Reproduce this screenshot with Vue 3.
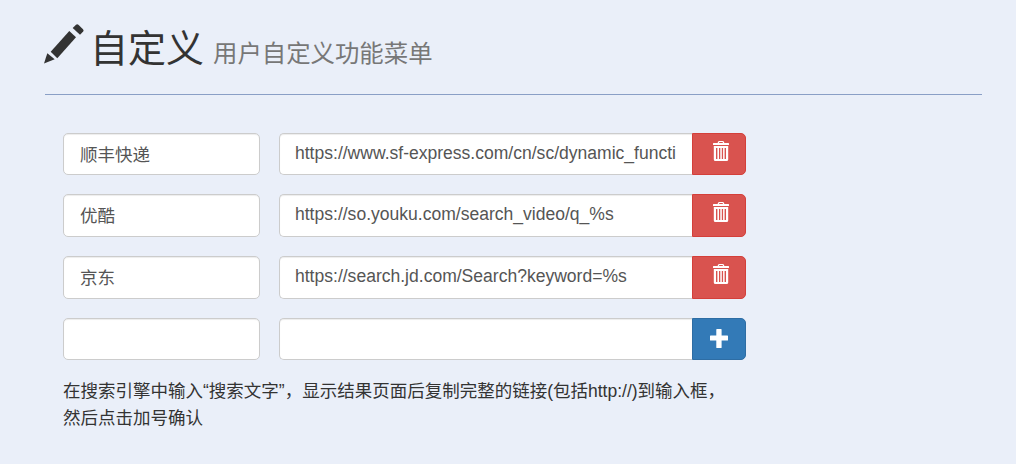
<script setup>
const rows = [
  { name: '顺丰快递', url: 'https://www.sf-express.com/cn/sc/dynamic_function/waybill/#search/bill-number/%s', kind: 'del' },
  { name: '优酷', url: 'https://so.youku.com/search_video/q_%s', kind: 'del' },
  { name: '京东', url: 'https://search.jd.com/Search?keyword=%s', kind: 'del' },
  { name: '', url: '', kind: 'add' }
]
</script>

<template>
  <div class="page">
    <header class="head">
      <svg class="pencil" viewBox="0 0 40 40" aria-hidden="true">
        <path d="M0 39.6 L3.3 29.3 L10.7 35.3 Z" />
        <path d="M6.7 27.7 L25.3 7 L32 13.3 L13.3 34.3 Z" />
        <path d="M28.7 4 L32 .8 Q33.2 -.2 34.4 .8 L39 5.2 Q40 6.4 39.2 7.4 L36 10.7 Z" />
      </svg>
      <h1 class="title">自定义<small class="sub">用户自定义功能菜单</small></h1>
    </header>
    <div class="form">
      <div v-for="(r, i) in rows" :key="i" class="row">
        <input class="field name" type="text" :value="r.name" />
        <div class="group">
          <input class="field url" type="text" :value="r.url" />
          <button class="btn" :class="r.kind" type="button">
            <svg v-if="r.kind === 'del'" class="ico trash" viewBox="0 0 16 20" aria-hidden="true">
              <path fill-rule="evenodd" d="M4.6 2 L5.2 .6 Q5.5 0 6.2 0 H9.8 Q10.5 0 10.8 .6 L11.4 2 H15.4 Q16 2 16 2.6 V4 H0 V2.6 Q0 2 .6 2 Z M6 2 H10 L9.6 1 H6.4 Z" />
              <path fill-rule="evenodd" d="M.8 5 H15.2 V18.4 Q15.2 20 13.6 20 H2.4 Q.8 20 .8 18.4 Z M3 7 V18 H4.4 V7 Z M6 7 V18 H7.3 V7 Z M8.8 7 V18 H10.1 V7 Z M11.6 7 V18 H13 V7 Z" />
            </svg>
            <svg v-else class="ico plus" viewBox="0 0 18 19" aria-hidden="true">
              <path d="M6.3 .5 Q6.3 0 6.9 0 H11 Q11.6 0 11.6 .5 V6.5 H17.4 Q18 6.5 18 7 V11 Q18 11.6 17.4 11.6 H11.6 V18.5 Q11.6 19 11 19 H6.9 Q6.3 19 6.3 18.5 V11.6 H.6 Q0 11.6 0 11 V7 Q0 6.5 .6 6.5 H6.3 Z" />
            </svg>
          </button>
        </div>
      </div>
      <p class="note">在搜索引擎中输入“搜索文字”，显示结果页面后复制完整的链接(包括http://)到输入框，<br />然后点击加号确认</p>
    </div>
  </div>
</template>

<style>
html, body { margin: 0; background: #eaeff9; }
</style>

<style scoped>
.page {
  width: 1016px;
  height: 464px;
  box-sizing: border-box;
  padding: 24px 34px 0 44px;
  background: #eaeff9;
  color: #333;
  font-family: "Liberation Sans", "Noto Sans CJK SC", sans-serif;
  overflow: hidden;
}
.head {
  display: flex;
  align-items: flex-start;
  height: 70px;
  margin-left: 1px;
  border-bottom: 1px solid #8a9fc6;
}
.pencil {
  width: 40px;
  height: 40px;
  margin-left: -1px;
  margin-right: 6px;
  fill: #333;
  flex: none;
}
.title {
  margin: 1px 0 0;
  font-size: 38px;
  line-height: 48px;
  font-weight: 400;
  white-space: nowrap;
}
.sub {
  margin-left: 9px;
  font-size: 24.4px;
  font-weight: 400;
  color: #777;
}
.form {
  width: 683px;
  margin: 37.8px 0 0 19px;
  display: flex;
  flex-direction: column;
  gap: 19.16px;
}
.row {
  display: flex;
  gap: 19px;
  height: 42.5px;
}
.group {
  display: flex;
  flex: none;
  width: 467px;
}
.field {
  box-sizing: border-box;
  height: 100%;
  margin: 0;
  padding: 0 16px 2px;
  background: #fff;
  border: 1px solid #ccc;
  box-shadow: inset 0 1px 1px rgba(0, 0, 0, .075);
  font: 17.55px/1.33 "Liberation Sans", "Noto Sans CJK SC", sans-serif;
  color: #555;
  outline: none;
}
.name {
  width: 197px;
  flex: none;
  border-radius: 5px;
}
.url {
  width: 413px;
  flex: none;
  padding-left: 15px;
  border-radius: 5px 0 0 5px;
  border-right: 0;
}
.btn {
  width: 54px;
  flex: none;
  height: 100%;
  margin: 0;
  padding: 0;
  display: flex;
  align-items: flex-start;
  justify-content: center;
  box-sizing: border-box;
  border: 1px solid;
  border-radius: 0 5px 5px 0;
}
.del { background: #d9534f; border-color: #d43f3a; }
.add { background: #337ab7; border-color: #2e6da4; }
.ico { fill: #fff; display: block; }
.trash { width: 16px; height: 20px; margin: 7px 0 0 3px; }
.plus { width: 18px; height: 19px; margin-top: 10px; }
.note {
  margin: -1px 0 0;
  font-size: 17.5px;
  line-height: 26.5px;
}
</style>
